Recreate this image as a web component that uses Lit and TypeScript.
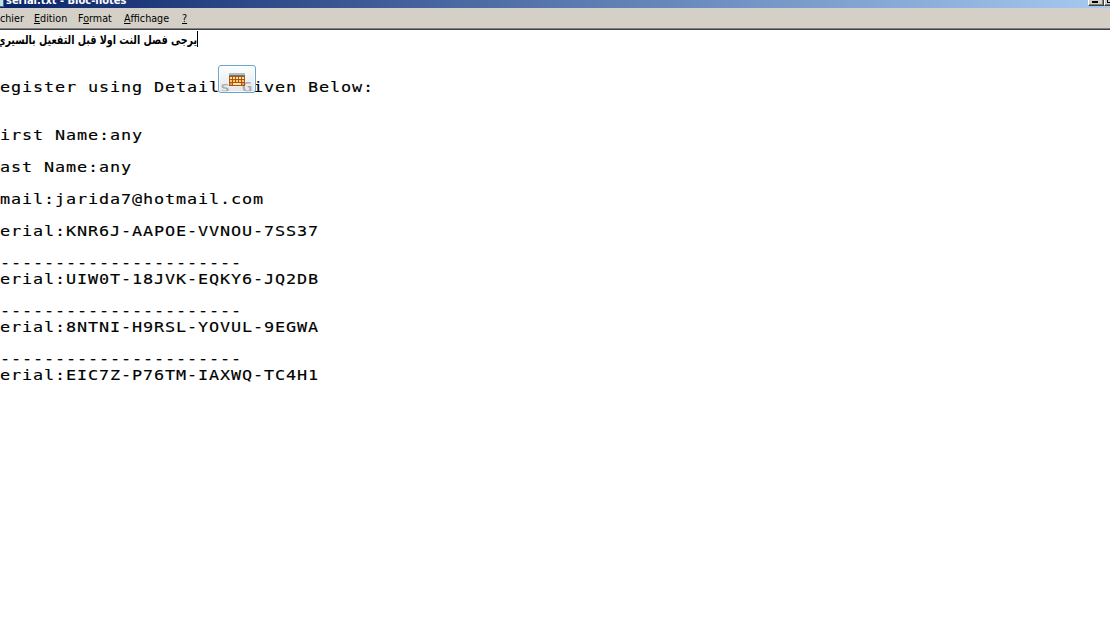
import { LitElement, html, css, svg } from 'lit';
import { customElement, property } from 'lit/decorators.js';

const LINES = [
  '',
  '',
  'egister using Details Given Below:',
  '',
  '',
  'irst Name:any',
  '',
  'ast Name:any',
  '',
  'mail:jarida7@hotmail.com',
  '',
  'erial:KNR6J-AAPOE-VVNOU-7SS37',
  '',
  '----------------------',
  'erial:UIW0T-18JVK-EQKY6-JQ2DB',
  '',
  '----------------------',
  'erial:8NTNI-H9RSL-YOVUL-9EGWA',
  '',
  '----------------------',
  'erial:EIC7Z-P76TM-IAXWQ-TC4H1',
];

@customElement('keyboard-badge')
export class KeyboardBadge extends LitElement {
  static styles = css`
    :host {
      display: block;
      box-sizing: border-box;
      width: 38px;
      height: 28px;
      border: 1px solid #6ba5cc;
      border-radius: 3px;
      background: linear-gradient(rgba(250, 252, 253, 0.75), rgba(216, 221, 226, 0.72));
      box-shadow: inset 0 0 0 1px rgba(255, 255, 255, 0.7);
    }

    svg {
      display: block;
      margin: 7px 0 0 10px;
    }
  `;

  render() {
    const keys = [0, 1, 2, 3, 4];
    return html`
      <svg width="16" height="13" viewBox="0 0 16 13" shape-rendering="crispEdges">
        <rect width="16" height="2" fill="#a5c4cf" />
        <rect y="2" width="16" height="11" fill="#a9560f" />
        <rect y="2" width="16" height="1" fill="#887052" />
        ${keys.map((k) => svg`<rect x=${1 + k * 3} y="4" width="2" height="2" fill="#ffe0a8" />`)}
        ${keys.map((k) => svg`<rect x=${1 + k * 3} y="7" width="2" height="2" fill="#f9c47c" />`)}
        <rect x="1" y="10" width="2" height="2" fill="#ec9c48" />
        <rect x="4" y="10" width="8" height="2" fill="#ffe0a8" />
        <rect x="13" y="10" width="2" height="2" fill="#ec9c48" />
      </svg>
    `;
  }
}

@customElement('menu-bar')
export class MenuBar extends LitElement {
  static styles = css`
    :host {
      display: flex;
      box-sizing: border-box;
      height: 22px;
      background: #d4d0c8;
      border-bottom: 1px solid #404040;
      box-shadow: inset 0 -1px #808080;
      font: 11px/21px 'DejaVu Sans Condensed', 'DejaVu Sans', sans-serif;
      font-stretch: condensed;
      color: #000;
    }

    .item {
      white-space: nowrap;
      margin-right: 12px;
    }

    .label {
      display: inline-block;
      transform: scaleX(0.97);
      transform-origin: 0 50%;
    }

    .cut {
      width: 22px;
    }

    .edition {
      width: 32px;
    }

    .format {
      width: 34px;
    }

    .affichage {
      width: 46px;
    }

    u {
      text-underline-offset: 1px;
      text-decoration-thickness: 1px;
    }
  `;

  render() {
    return html`
      <div class="item cut"><span class="label">chier</span></div>
      <div class="item edition"><span class="label"><u>E</u>dition</span></div>
      <div class="item format"><span class="label">F<u>o</u>rmat</span></div>
      <div class="item affichage"><span class="label"><u>A</u>ffichage</span></div>
      <div class="item"><span class="label"><u>?</u></span></div>
    `;
  }
}

@customElement('app-root')
export class AppRoot extends LitElement {
  static styles = css`
    :host {
      display: flex;
      flex-direction: column;
      width: 1110px;
      height: 635px;
      overflow: hidden;
      background: #fff;
      color: #000;
    }

    .titlebar {
      display: flex;
      align-items: flex-end;
      height: 8px;
      flex: none;
      overflow: hidden;
      background: linear-gradient(to right, #0a246a, #a6caf0);
    }

    .file-icon {
      flex: none;
      align-self: flex-start;
      width: 3px;
      height: 6px;
      background: #bfe0e8;
      border-right: 1px solid #4c6c80;
      border-bottom: 1px solid #4c6c80;
    }

    .title {
      flex: 1;
      margin: 0 0 0 2px;
      white-space: pre;
      color: #fff;
      font: bold 11px/14px 'DejaVu Sans Condensed', 'DejaVu Sans', sans-serif;
      font-stretch: condensed;
    }

    .controls {
      display: flex;
      align-self: flex-start;
      flex: none;
      width: 22px;
      overflow: hidden;
    }

    .control {
      display: flex;
      box-sizing: border-box;
      flex: none;
      width: 16px;
      height: 6px;
      background: #d4d0c8;
      border: solid #404040;
      border-width: 0 1px 1px 0;
      border-left: 1px solid #fff;
      box-shadow: inset -1px -1px #808080;
    }

    .minimize {
      width: 6px;
      height: 2px;
      margin: 1px 0 0 3px;
      background: #000;
    }

    .maximize {
      box-sizing: border-box;
      width: 9px;
      height: 3px;
      margin-left: 2px;
      border: solid #000;
      border-width: 0 1px 1px;
    }

    .document {
      position: relative;
      flex: 1;
      padding-top: 1px;
    }

    .first-line {
      display: flex;
      justify-content: flex-end;
      box-sizing: border-box;
      width: 198px;
      height: 16px;
      border-right: 1px solid #000;
    }

    .arabic {
      flex: none;
      direction: rtl;
      white-space: nowrap;
      font: bold 12px/18px 'DejaVu Sans', sans-serif;
      transform: scaleX(0.795);
      transform-origin: 100% 50%;
    }

    .line {
      width: 800px;
      height: 16px;
      white-space: pre;
      font: 14px/16px 'DejaVu Sans Mono', monospace;
      letter-spacing: 0.738px;
      -webkit-text-stroke: 0.15px #000;
      transform: scaleX(1.2);
      transform-origin: 0 50%;
    }

    keyboard-badge {
      position: absolute;
      left: 218px;
      top: 35px;
    }
  `;

  @property() name = 'serial.txt - Bloc-notes';

  render() {
    return html`
      <div class="titlebar">
        <div class="file-icon"></div>
        <div class="title">${this.name}</div>
        <div class="controls">
          <div class="control"><div class="minimize"></div></div>
          <div class="control"><div class="maximize"></div></div>
        </div>
      </div>
      <menu-bar></menu-bar>
      <div class="document">
        <div class="first-line">
          <div class="arabic">يرجى فصل النت اولا قبل التفعيل بالسيري</div>
        </div>
        ${LINES.map((line) => html`<div class="line">${line}</div>`)}
        <keyboard-badge></keyboard-badge>
      </div>
    `;
  }
}
